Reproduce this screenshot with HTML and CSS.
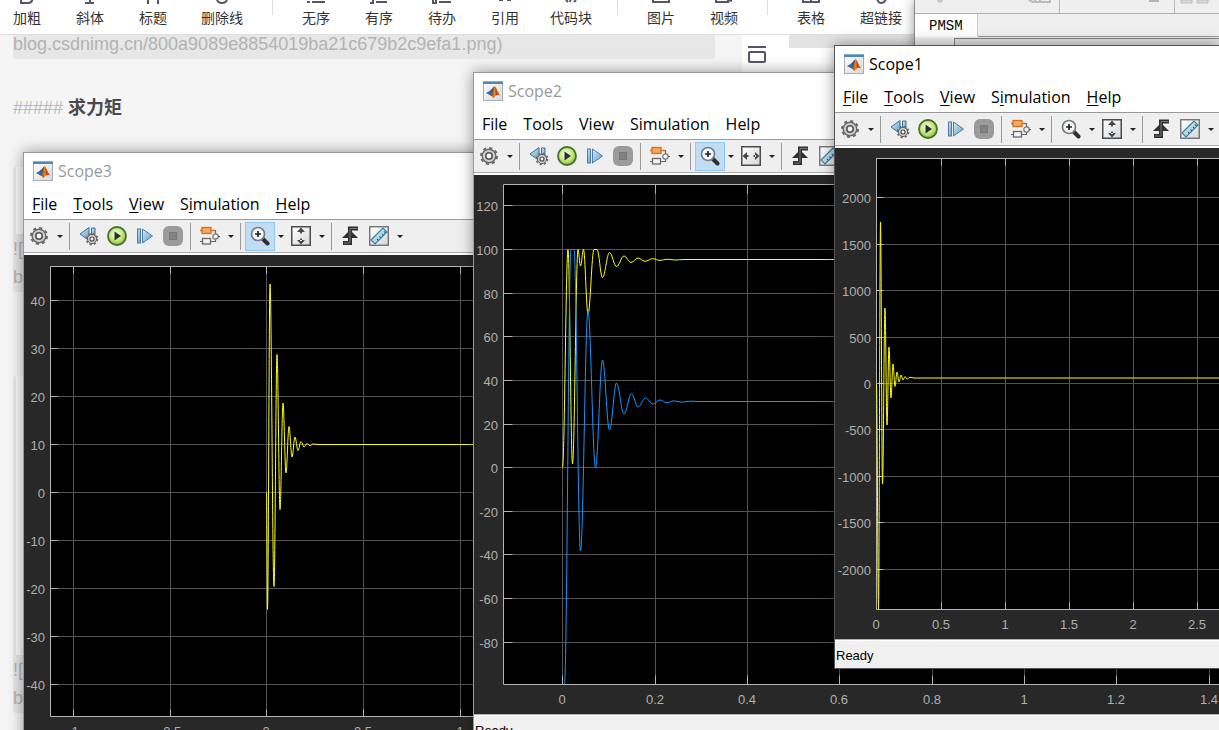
FILE: index.html
```
<!DOCTYPE html>
<html lang="zh-CN">
<head>
<meta charset="utf-8">
<title>Scopes</title>
<link rel="stylesheet" href="styles.css">
</head>
<body>
<svg class="defs" aria-hidden="true">
  <defs>
    <linearGradient id="gBlue" x1="0" y1="0" x2="1" y2="1"><stop offset="0" stop-color="#d6ebf6"/><stop offset="1" stop-color="#5f9cc4"/></linearGradient>
    <linearGradient id="gFrame" x1="0" y1="0" x2="1" y2="1"><stop offset="0" stop-color="#ffffff"/><stop offset="1" stop-color="#d4d8dc"/></linearGradient>
    <radialGradient id="gGreen" cx=".45" cy=".4" r=".6"><stop offset="0" stop-color="#fbfff0"/><stop offset=".6" stop-color="#c4e87c"/><stop offset="1" stop-color="#86bf3a"/></radialGradient>
    <linearGradient id="gLogo" x1="0" y1="0" x2="1" y2="0"><stop offset="0" stop-color="#8a1f10"/><stop offset=".45" stop-color="#f08a24"/><stop offset="1" stop-color="#b5300f"/></linearGradient>
    <symbol id="matlab" viewBox="0 0 20 20">
      <rect x=".5" y=".5" width="19" height="19" fill="url(#gFrame)" stroke="#a3adb6"/>
      <rect x="0" y="0" width="20" height="3" fill="#4f86b3"/><rect x="0" y="0" width="20" height="1" fill="#86b0d0"/>
      <path d="M3 12 L7.500 9.500 L10 11.500 L7.500 14.500 Z" fill="#2f6ea8"/>
      <path d="M7 9.500 C9 8.500 10 6 11.500 5 L10.500 11 L7.500 14.500 C8 13 8 11 7 9.500Z" fill="#3d5878"/>
      <path d="M11.500 5 C13 5 14.500 11 17 14.500 C15 13.500 14.200 13.600 13 14.500 C11.800 15.500 11 16.500 10 17 C9.500 15.500 8.800 14.500 7.500 14.500 C9.500 13 10.500 9 11.500 5Z" fill="url(#gLogo)"/>
      <path d="M12 6 L13 14.200 L14.800 13.300Z" fill="#c23a12"/>
    </symbol>
    <symbol id="gear" viewBox="0 0 20 20">
      <circle cx="10" cy="10" r="8" fill="none" stroke="#6a6a6a" stroke-width="2" stroke-dasharray="3.140 3.140"/>
      <circle cx="10" cy="10" r="6.800" fill="#cfcfcf" stroke="#6a6a6a" stroke-width="1.400"/>
      <circle cx="10" cy="10" r="3.200" fill="#f4f4f4" stroke="#555" stroke-width="1.600"/>
    </symbol>
    <symbol id="back" viewBox="0 0 20 20">
      <path d="M1 8 L10 1.500 V14.500 Z" fill="url(#gBlue)" stroke="#3f7196"/>
      <path d="M12.500 2 h3.500 v9 h-3.500 z" fill="url(#gBlue)" stroke="#3f7196"/>
      <circle cx="13" cy="13" r="5.500" fill="none" stroke="#666" stroke-width="1.600" stroke-dasharray="2.160 2.160"/>
      <circle cx="13" cy="13" r="4.600" fill="#cfcfcf" stroke="#5e5e5e" stroke-width="1"/>
      <circle cx="13" cy="13" r="2" fill="#f4f4f4" stroke="#505050" stroke-width="1.200"/>
    </symbol>
    <symbol id="run" viewBox="0 0 20 20">
      <circle cx="10" cy="10" r="9" fill="url(#gGreen)" stroke="#48702a" stroke-width="1.800"/>
      <path d="M7.500 5.500 L14 10 L7.500 14.500Z" fill="#2b2f33"/>
    </symbol>
    <symbol id="fwd" viewBox="0 0 20 20">
      <rect x="2.500" y="3" width="3" height="14" fill="url(#gBlue)" stroke="#4a7ea6"/>
      <path d="M7.500 3 L17.500 10 L7.500 17Z" fill="url(#gBlue)" stroke="#4a7ea6"/>
    </symbol>
    <symbol id="stop" viewBox="0 0 20 20">
      <rect x="0" y="0" width="20" height="20" rx="6" fill="#9b9b9b"/>
      <rect x="6.500" y="6.500" width="7" height="7" fill="#828282" stroke="#777"/>
    </symbol>
    <symbol id="blocks" viewBox="0 0 20 20">
      <path d="M11 4.500 H15.500 V8 M0 15.500 H3 M11 15.500 H15.500 V13" fill="none" stroke="#666" stroke-width="1.200"/>
      <rect x="2" y="1.500" width="9" height="6" fill="#f6a85c" stroke="#d0712a" stroke-width="1.300"/>
      <path d="M0 4.500 H2 M11 4.500 H15" stroke="#d0712a" stroke-width="1.400"/>
      <rect x="2.500" y="12.500" width="8" height="5.500" fill="#f4f4f4" stroke="#6a6a6a" stroke-width="1.300"/>
      <circle cx="15.500" cy="10.500" r="2.700" fill="#f4f4f4" stroke="#777" stroke-width="1.200"/>
      <path d="M18 10.500 h2" stroke="#555"/>
    </symbol>
    <symbol id="zoom" viewBox="0 0 20 20">
      <path d="M12.500 12.500 L17.500 17.500" stroke="#2f2f2f" stroke-width="4" stroke-linecap="round"/>
      <circle cx="8" cy="8" r="6.500" fill="#f3f8fb" stroke="#777d82" stroke-width="1.700"/>
      <path d="M8 5 v6 M5 8 h6" stroke="#222" stroke-width="1.700"/>
    </symbol>
    <symbol id="fitY" viewBox="0 0 20 20">
      <rect x=".75" y=".75" width="18.500" height="18.500" fill="url(#gFrame)" stroke="#4c4c4c" stroke-width="1.500"/>
      <path d="M10 1.500 L14 6 H6Z M10 18.500 L14 14 H6Z M9 5 h2 v2.500 h-2z M9 12.500 h2 v2.500 h-2z" fill="#484848"/>
    </symbol>
    <symbol id="fitX" viewBox="0 0 20 20">
      <rect x=".75" y=".75" width="18.500" height="18.500" fill="url(#gFrame)" stroke="#4c4c4c" stroke-width="1.500"/>
      <path d="M1.500 10 L6 6 V14Z M18.500 10 L14 6 V14Z M5 9 h2.500 v2 h-2.500z M12.500 9 h2.500 v2 h-2.500z" fill="#484848"/>
    </symbol>
    <symbol id="trigger" viewBox="0 0 20 20">
      <path d="M2 17 H9 V2.500 H17" fill="none" stroke="#303030" stroke-width="4"/>
      <path d="M1 12 L9 4 L17 12Z" fill="#303030"/>
      <path d="M3 17 H9 V2.500 H16.500" fill="none" stroke="#777" stroke-width="1"/>
    </symbol>
    <symbol id="ruler" viewBox="0 0 20 20">
      <rect x=".75" y=".75" width="18.500" height="18.500" fill="url(#gFrame)" stroke="#6a6a6a" stroke-width="1.300"/>
      <path d="M2 14 L14 2 L18 6 L6 18 Z" fill="#b4d8ea" stroke="#3f7ba0" stroke-width="1.100"/>
      <path d="M8 13 l1.600 1.600 M10.500 10.500 l1.600 1.600 M13 8 l1.600 1.600 M15 5.500 l1.600 1.600" stroke="#2d648a" stroke-width="1.100"/>
    </symbol>
  </defs>
</svg>

<div class="desktop">
  <main class="editor">
    <nav class="format-bar" aria-label="格式">
      <button class="tool"><svg viewBox="0 0 20 4"><path d="M4 -8 V3 H11 Q15.500 3 15.500 -2" /></svg>加粗</button>
      <button class="tool"><svg viewBox="0 0 20 4"><path d="M10 -8 V3 M5 3 H14"/></svg>斜体</button>
      <button class="tool"><svg viewBox="0 0 20 4"><path d="M5 -8 V4 M15 -8 V4"/></svg>标题</button>
      <button class="tool"><svg viewBox="0 0 20 4"><path d="M5 0 Q6 3 10 3 Q14 3 15 0"/></svg>删除线</button>
      <span class="divider"></span>
      <button class="tool"><svg viewBox="0 0 20 4"><path d="M1 2 H4 M6 2 H19"/></svg>无序</button>
      <button class="tool"><svg viewBox="0 0 20 4"><path d="M1 3 H5 M4 0 V3 M7 2 H18"/></svg>有序</button>
      <button class="tool"><svg viewBox="0 0 20 4"><path d="M1 0 V3 H4 V0 M7 2 H19"/></svg>待办</button>
      <button class="tool"><svg viewBox="0 0 20 4"><path d="M4 0 H8 M12 0 H16"/></svg>引用</button>
      <button class="tool"><svg viewBox="0 0 20 4"><path d="M5 0 L7 2 M10 -3 L9 2 M15 0 L13 2"/></svg>代码块</button>
      <span class="divider"></span>
      <button class="tool"><svg viewBox="0 0 20 4"><path d="M2 -6 V2 H18 V-6"/></svg>图片</button>
      <button class="tool"><svg viewBox="0 0 20 4"><path d="M2 -6 V2 H14 V0 L18 1"/></svg>视频</button>
      <span class="divider"></span>
      <button class="tool"><svg viewBox="0 0 20 4"><path d="M2 -6 V2 H18 V-6 M10 -6 V2"/></svg>表格</button>
      <button class="tool"><svg viewBox="0 0 20 4"><path d="M6 -2 Q7 3 10 3 Q14 3 15 -2"/></svg>超链接</button>
    </nav>
    <div class="panes">
      <section class="source">
        <p class="code first">blog.csdnimg.cn/800a9089e8854019ba21c679b2c9efa1.png)</p>
        <h5 class="heading"><span class="hashes">#####</span> 求力矩</h5>
        <div class="code image-block"><div class="image small"></div>![<br>b</div>
        <div class="code image-block"><div class="image large"></div>![<br>b</div>
      </section>
      <aside class="preview">
        <button class="pane-toggle" aria-label="预览"><svg width="18" height="17" viewBox="0 0 18 17"><path d="M0 1 H18" stroke="#55556a" stroke-width="2"/><rect x="1" y="6" width="16" height="10" rx="1" fill="none" stroke="#55556a" stroke-width="2"/></svg></button>
        <div class="preview-text"></div>
      </aside>
    </div>
  </main>

  <section class="model">
    <div class="model-tools">
      <svg width="305" height="13" viewBox="0 0 305 13">
        <path d="M23 0 h4 v2 h-4z" fill="#ddd" stroke="#bbb"/>
        <path d="M114 0 l4 2 h17 v-2 M120 0 v2 M125 0 v2" fill="none" stroke="#bbb" stroke-width="2"/>
        <path d="M144.500 0 V13 M259.500 0 V13" stroke="#b8b8b8"/>
        <path d="M234 1 h10" stroke="#b5b5b5" stroke-width="2"/>
        <path d="M266 0 h11 v3 h-11z M282 0 h11 v3 h-11z" fill="#ddd" stroke="#bbb"/>
      </svg>
    </div>
    <div class="model-tabs"><button class="model-tab">PMSM</button></div>
    <div class="model-body"><div class="canvas"></div></div>
  </section>

  <section class="window scope3">
    <header class="title"><svg class="logo"><use href="#matlab"/></svg>Scope3</header>
    <nav class="menu"><button><u>F</u>ile</button><button><u>T</u>ools</button><button><u>V</u>iew</button><button>S<u>i</u>mulation</button><button><u>H</u>elp</button></nav>
    <div class="toolbar">
      <button class="icon" aria-label="Configuration"><svg><use href="#gear"/></svg></button><button class="caret" aria-label="More"></button><i></i>
      <button class="icon" aria-label="Step back"><svg><use href="#back"/></svg></button><button class="icon" aria-label="Run"><svg><use href="#run"/></svg></button><button class="icon" aria-label="Step forward"><svg><use href="#fwd"/></svg></button><button class="icon" aria-label="Stop"><svg><use href="#stop"/></svg></button><i></i>
      <button class="icon" aria-label="Highlight block"><svg><use href="#blocks"/></svg></button><button class="caret" aria-label="More"></button><i></i>
      <button class="icon active" aria-label="Zoom"><svg><use href="#zoom"/></svg></button><button class="caret" aria-label="More"></button><button class="icon" aria-label="Fit"><svg><use href="#fitY"/></svg></button><button class="caret" aria-label="More"></button><i></i>
      <button class="icon" aria-label="Triggers"><svg><use href="#trigger"/></svg></button><button class="icon" aria-label="Measurements"><svg><use href="#ruler"/></svg></button><button class="caret" aria-label="More"></button>
    </div>
    <svg class="plot" id="plot3" width="100%" height="500"></svg>
  </section>

  <section class="window scope2">
    <header class="title"><svg class="logo"><use href="#matlab"/></svg>Scope2</header>
    <nav class="menu"><button>File</button><button>Tools</button><button>View</button><button>Simulation</button><button>Help</button></nav>
    <div class="toolbar">
      <button class="icon" aria-label="Configuration"><svg><use href="#gear"/></svg></button><button class="caret" aria-label="More"></button><i></i>
      <button class="icon" aria-label="Step back"><svg><use href="#back"/></svg></button><button class="icon" aria-label="Run"><svg><use href="#run"/></svg></button><button class="icon" aria-label="Step forward"><svg><use href="#fwd"/></svg></button><button class="icon" aria-label="Stop"><svg><use href="#stop"/></svg></button><i></i>
      <button class="icon" aria-label="Highlight block"><svg><use href="#blocks"/></svg></button><button class="caret" aria-label="More"></button><i></i>
      <button class="icon active" aria-label="Zoom"><svg><use href="#zoom"/></svg></button><button class="caret" aria-label="More"></button><button class="icon" aria-label="Fit"><svg><use href="#fitX"/></svg></button><button class="caret" aria-label="More"></button><i></i>
      <button class="icon" aria-label="Triggers"><svg><use href="#trigger"/></svg></button><button class="icon" aria-label="Measurements"><svg><use href="#ruler"/></svg></button>
    </div>
    <svg class="plot" id="plot2" width="100%" height="539"></svg>
    <footer class="status">Ready</footer>
  </section>

  <section class="window scope1">
    <header class="title front"><svg class="logo"><use href="#matlab"/></svg>Scope1</header>
    <nav class="menu"><button><u>F</u>ile</button><button><u>T</u>ools</button><button><u>V</u>iew</button><button>S<u>i</u>mulation</button><button><u>H</u>elp</button></nav>
    <div class="toolbar">
      <button class="icon" aria-label="Configuration"><svg><use href="#gear"/></svg></button><button class="caret" aria-label="More"></button><i></i>
      <button class="icon" aria-label="Step back"><svg><use href="#back"/></svg></button><button class="icon" aria-label="Run"><svg><use href="#run"/></svg></button><button class="icon" aria-label="Step forward"><svg><use href="#fwd"/></svg></button><button class="icon" aria-label="Stop"><svg><use href="#stop"/></svg></button><i></i>
      <button class="icon" aria-label="Highlight block"><svg><use href="#blocks"/></svg></button><button class="caret" aria-label="More"></button><i></i>
      <button class="icon" aria-label="Zoom"><svg><use href="#zoom"/></svg></button><button class="caret" aria-label="More"></button><button class="icon" aria-label="Fit"><svg><use href="#fitY"/></svg></button><button class="caret" aria-label="More"></button><i></i>
      <button class="icon" aria-label="Triggers"><svg><use href="#trigger"/></svg></button><button class="icon" aria-label="Measurements"><svg><use href="#ruler"/></svg></button><button class="caret" aria-label="More"></button>
    </div>
    <svg class="plot" id="plot1" width="100%" height="491"></svg>
    <footer class="status">Ready</footer>
  </section>
</div>
<script src="script.js"></script>
</body>
</html>
```

FILE: styles.css
```
* { box-sizing: border-box; }
body {
  margin: 0;
  font-family: "Liberation Sans", "Noto Sans CJK SC", sans-serif;
  background: #f5f5f5;
}
button {
  margin: 0;
  padding: 0;
  border: 0;
  background: none;
  font: inherit;
  color: inherit;
}
.defs { position: absolute; width: 0; height: 0; }
.desktop { position: relative; height: 100vh; overflow: hidden; }

/* Markdown editor */
.editor { height: 100%; display: flex; flex-direction: column; }
.format-bar {
  display: grid;
  grid-template-columns: 54px 72px 54px 84px 16px 72px 54px 72px 54px 78px 14px 74px 52px 34px 54px 86px;
  height: 35px;
  flex: none;
  background: #fff;
  border-bottom: 1px solid #dedede;
}
.tool {
  display: flex;
  flex-direction: column;
  align-items: center;
  font: 14px/26px "Noto Sans CJK SC", sans-serif;
  color: #333;
  white-space: nowrap;
}
.tool svg { display: block; width: 20px; height: 4px; fill: none; stroke: #55556a; stroke-width: 2; }
.divider { width: 1px; height: 15px; background: #ddd; justify-self: center; }
.panes { flex: 1; display: flex; min-height: 0; }
.source { flex: 0 0 742px; padding: 0 27px 0 13px; overflow: hidden; }
.code {
  margin: 0;
  background: #e7e7e7;
  color: #b3b3b3;
  font-size: 18px;
  line-height: 28px;
  border-radius: 3px;
}
.first { line-height: 18px; padding-bottom: 6px; border-radius: 0 0 3px 3px; }
.heading { margin: 35px 0 45px; font-size: 18px; line-height: 28px; color: #4a4a4a; }
.hashes { font-weight: 400; color: #b9b9b9; }
.image-block { padding-bottom: 1px; margin-bottom: 84px; }
.image { margin: 0 0 1px 3px; background: #fbfbfb; }
.small { height: 67px; }
.large { height: 279px; }
.preview { flex: 1; display: flex; gap: 23px; align-items: flex-start; background: #fff; }
.pane-toggle { padding: 11px 0 0 6px; }
.pane-toggle svg { display: block; }
.preview-text { flex: 1; height: 13px; background: #e3e3e3; }

/* Model window behind the scopes */
.model {
  position: absolute;
  top: 0;
  left: 914px;
  right: 0;
  height: 200px;
  border-left: 1px solid #8a8a8a;
  background: #efefef;
  box-shadow: 0 0 12px rgba(0, 0, 0, .4);
}
.model-tools { height: 14px; overflow: hidden; border-bottom: 1px solid #b0b0b0; }
.model-tools svg { display: block; }
.model-tabs { display: flex; height: 23px; border-bottom: 1px solid #999; }
.model-tab {
  height: 23px;
  padding: 0 14px;
  background: #fff;
  border-right: 1px solid #ccc;
  font: 14px/25px "Liberation Mono", monospace;
  color: #000;
}
.model-body { padding: 1px 0 0 39px; }
.canvas { height: 100px; background: #e2e2e2; border: solid #7f848a; border-width: 1px 0 0 1px; }

/* Scope windows */
.window {
  position: absolute;
  right: 0;
  background: #fff;
  border: 1px solid #999;
  border-right: 0;
  box-shadow: 0 0 14px rgba(0, 0, 0, .4);
}
.scope3 { left: 23px; top: 152px; }
.scope2 { left: 473px; top: 72px; }
.scope1 { left: 834px; top: 45px; border-color: #555; }
.title {
  display: flex;
  align-items: center;
  gap: 5px;
  height: 36px;
  padding-left: 9px;
  font: 16px/20px "Open Sans", "Noto Sans", sans-serif;
  color: #999;
}
.front { color: #000; }
.logo { width: 20px; height: 20px; }
.menu {
  display: flex;
  gap: 16px;
  height: 30px;
  padding-left: 8px;
  font: 16px/30px "Open Sans", "Noto Sans", sans-serif;
  color: #000;
}
.menu u { text-underline-offset: 2px; text-decoration-thickness: 1px; }
.toolbar {
  display: flex;
  align-items: center;
  height: 34px;
  margin-bottom: 2px;
  padding-left: 1px;
  overflow: hidden;
  background: #efefef;
  border-top: 1px solid #999;
  border-bottom: 1px solid #aaa;
}
.toolbar i { flex: none; width: 1px; height: 27px; margin: 0 5px 0 3px; background: #999; }
.icon {
  flex: none;
  display: grid;
  place-items: center;
  width: 28px;
  height: 27px;
}
.icon svg { width: 20px; height: 20px; }
.active { background: #c0ddf5; outline: 1px solid #90c8f6; }
.caret { flex: none; display: grid; place-items: center; width: 13px; height: 27px; }
.caret::before {
  content: "";
  border: 3px solid transparent;
  border-top-color: #222;
  border-bottom: 0;
}
.plot { display: block; background: #282828; }
.plot text { font: 13px "Liberation Sans", sans-serif; fill: #afafaf; }
.status {
  height: 29px;
  padding-left: 1px;
  background: #f0f0f0;
  border-top: 1px solid #b5adad;
  box-shadow: inset 0 1px #fff;
  font-size: 13px;
  line-height: 31px;
  color: #000;
}
```

FILE: script.js
```
const NS = "http://www.w3.org/2000/svg";

function add(parent, tag, attrs, text) {
  const node = document.createElementNS(NS, tag);
  for (const key in attrs) node.setAttribute(key, attrs[key]);
  if (text !== undefined) node.textContent = text;
  parent.appendChild(node);
  return node;
}

// Joins turning points with half-cosine segments, then runs level to the right.
function wave(points) {
  let d = "M" + points[0];
  for (let i = 1; i < points.length; i++) {
    const [x0, y0] = points[i - 1];
    const [x1, y1] = points[i];
    const m = (x1 - x0) * 0.37;
    d += `C${x0 + m} ${y0} ${x1 - m} ${y1} ${x1} ${y1}`;
  }
  return d + "H1300";
}

function drawPlot(id, o) {
  const svg = document.getElementById(id);
  const g = add(svg, "g", { transform: `translate(${-o.origin[0]} ${-o.origin[1]})` });
  const far = 2400;
  const h = o.bottom - o.top;
  add(g, "rect", { x: o.left, y: o.top, width: far, height: h, fill: "#000" });
  let grid = "", ticks = "";
  for (const [x, label] of o.x) {
    grid += `M${x} ${o.top}V${o.bottom}`;
    ticks += `M${x} ${o.top}v${o.tick}M${x} ${o.bottom}v${-o.tick}`;
    add(g, "text", { x: Math.floor(x), y: o.bottom + 19, "text-anchor": "middle" }, label);
  }
  for (const [y, label] of o.y) {
    grid += `M${o.left} ${y}H${far}`;
    ticks += `M${o.left} ${y}h${o.tick}`;
    add(g, "text", { x: o.labelEnd, y: y + 5, "text-anchor": "end" }, label);
  }
  add(g, "path", { d: grid, stroke: "#545454", fill: "none" });
  add(g, "path", { d: ticks + `M${far} ${o.top}H${o.left}V${o.bottom}H${far}`, stroke: "#b4b4b4", fill: "none" });
  for (const line of o.lines)
    add(g, "path", { d: wave(line.points), stroke: line.color, fill: "none", "stroke-width": 1 });
}

drawPlot("plot3", {
  origin: [24, 255], left: 50.5, top: 266.5, bottom: 716.5, tick: 7, labelEnd: 45,
  x: [[73.5, "-1"], [170.5, "-0.5"], [266.5, "0"], [363.5, "0.5"], [460.5, "1"]],
  y: [40, 30, 20, 10, 0, -10, -20, -30, -40].map((v, i) => [300.5 + 48 * i, v]),
  lines: [{ color: "#ffff11", points: [
    [266.5, 492.5], [267.5, 609.5], [270, 284], [274, 586.5], [277, 354.5], [280, 509.5], [283, 403],
    [286, 473], [289, 426.5], [292, 457], [295, 437], [298, 450.5], [301, 441.5], [304, 447],
    [307, 443.5], [310, 445.7], [313, 444], [318, 444.5]] }]
});

drawPlot("plot2", {
  origin: [474, 175], left: 503.5, top: 184.5, bottom: 684.5, tick: 9, labelEnd: 498,
  x: [[562.5, "0"], [655.5, "0.2"], [747.5, "0.4"], [839.5, "0.6"], [932.5, "0.8"], [1024.5, "1"], [1116.5, "1.2"], [1209.5, "1.4"]],
  y: [[205.5, 120], [249.5, 100], [293.5, 80], [336.5, 60], [380.5, 40], [424.5, 20], [467.5, 0], [511.5, -20], [554.5, -40], [598.5, -60], [642.5, -80]],
  lines: [
    { color: "#ffff11", points: [
      [562.5, 467.5], [568, 249.5], [572.5, 464], [578, 249.5], [580.5, 266], [583.5, 249.5], [588, 314],
      [594, 249.5], [597, 249.5], [602.5, 277.5], [609.5, 252.5], [616.5, 266.5], [624, 256], [631, 262.5],
      [638, 258], [645, 261.3], [652.5, 258.7], [660, 260.4], [667, 259.2], [675, 260], [684, 259.5]] },
    { color: "#1397ff", points: [
      [564.5, 684], [571, 249.5], [574, 249.5], [580.5, 551], [588, 311], [595.5, 467.5], [602.5, 360],
      [609.5, 430], [616.5, 383], [624, 414], [631.5, 393.5], [638, 407], [645.5, 398], [653, 404],
      [660, 400], [667, 402.7], [674, 400.9], [682, 402.2], [690, 401.2], [700, 401.5]] }]
});

drawPlot("plot1", {
  origin: [835, 148], left: 876.5, top: 158.5, bottom: 609.5, tick: 7, labelEnd: 871,
  x: [[876.5, "0"], [941.5, "0.5"], [1005.5, "1"], [1069.5, "1.5"], [1133.5, "2"], [1197.5, "2.5"]],
  y: [[197.5, 2000], [244.5, 1500], [290.5, 1000], [337.5, 500], [383.5, 0], [429.5, -500], [476.5, -1000], [522.5, -1500], [569.5, -2000]],
  lines: [{ color: "#ffff11", points: [
    [876.5, 384], [878.5, 609], [880.5, 222], [882.5, 484], [885, 308], [887, 425], [889, 347], [891, 398],
    [893, 364], [895, 386.5], [897, 372], [899, 382], [901, 375], [903, 380], [905, 376.5], [907, 379],
    [910, 377.3], [914, 378]] }]
});
```
